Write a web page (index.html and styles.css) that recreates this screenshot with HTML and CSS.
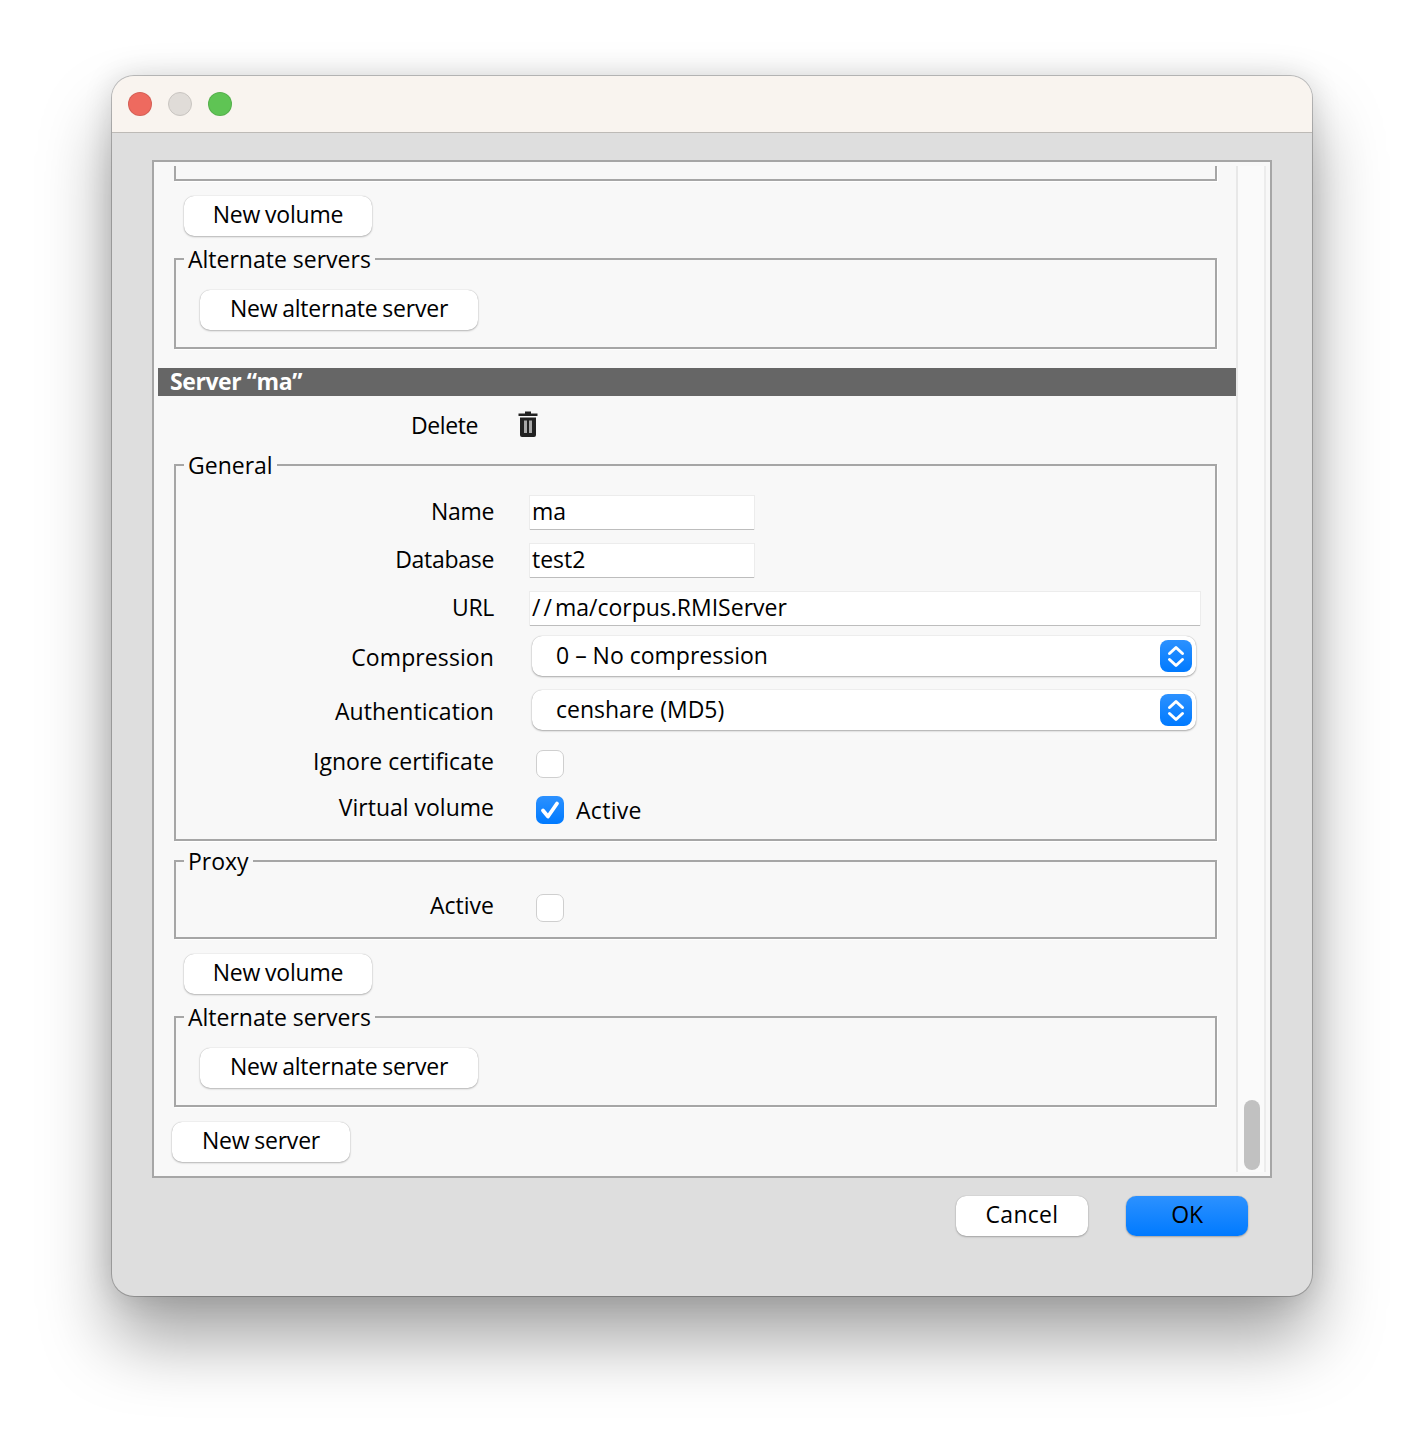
FILE: index.html
```html
<!DOCTYPE html>
<html lang="en">
<head>
<meta charset="utf-8">
<title>Server settings</title>
<link rel="stylesheet" href="styles.css">
</head>
<body>
<div class="window">
  <header class="titlebar">
    <span class="light light-close"></span>
    <span class="light light-min"></span>
    <span class="light light-max"></span>
  </header>
  <main class="dialog">
    <div class="panel">
      <div class="scroll-content">
        <div class="group-tail"></div>
        <button class="btn btn-volume">New volume</button>
        <fieldset class="group group-alt">
          <legend>Alternate servers</legend>
          <button class="btn btn-alt">New alternate server</button>
        </fieldset>
        <h2 class="server-head">Server “ma”</h2>
        <div class="delete-row">
          <span class="delete-label">Delete</span>
          <svg class="trash" width="20" height="26" viewBox="0 0 20 26">
            <path d="M7 0.500h6v2h6.500v2.500H.5V2.500h6.500z" fill="#222"/>
            <path d="M2 6.500h16v17.500a2 2 0 0 1-2 2H4a2 2 0 0 1-2-2z" fill="#222"/>
            <path d="M6 9.500h3v12.500H6zM11 9.500h3v12.500h-3z" fill="#a8a8a8"/>
          </svg>
        </div>
        <fieldset class="group group-general">
          <legend>General</legend>
          <div class="form">
            <label class="lbl lbl-text">Name</label>
            <div class="field field-short">ma</div>
            <label class="lbl lbl-text">Database</label>
            <div class="field field-short">test2</div>
            <label class="lbl lbl-text">URL</label>
            <div class="field field-long field-url"><span class="slashes">//</span>ma/corpus.RMIServer</div>
            <label class="lbl lbl-select">Compression</label>
            <div class="select"><span>0 – No compression</span>
              <span class="stepper"><svg width="32" height="32" viewBox="0 0 32 32"><path d="M9.500 13.500l6.500-6 6.500 6M9.500 19.500l6.500 6 6.500-6" fill="none" stroke="#fff" stroke-width="3" stroke-linecap="round" stroke-linejoin="round"/></svg></span>
            </div>
            <label class="lbl lbl-select">Authentication</label>
            <div class="select select-last"><span>censhare (MD5)</span>
              <span class="stepper"><svg width="32" height="32" viewBox="0 0 32 32"><path d="M9.500 13.500l6.500-6 6.500 6M9.500 19.500l6.500 6 6.500-6" fill="none" stroke="#fff" stroke-width="3" stroke-linecap="round" stroke-linejoin="round"/></svg></span>
            </div>
            <label class="lbl lbl-check">Ignore certificate</label>
            <div class="check-row"><span class="check"></span></div>
            <label class="lbl lbl-check">Virtual volume</label>
            <div class="check-row"><span class="check check-on"><svg width="28" height="28" viewBox="0 0 28 28"><path d="M7 14.500l5 6 9-13" fill="none" stroke="#fff" stroke-width="3.800" stroke-linecap="round" stroke-linejoin="round"/></svg></span><span class="check-text">Active</span></div>
          </div>
        </fieldset>
        <fieldset class="group group-proxy">
          <legend>Proxy</legend>
          <div class="form">
            <label class="lbl lbl-check">Active</label>
            <div class="check-row"><span class="check"></span></div>
          </div>
        </fieldset>
        <button class="btn btn-volume">New volume</button>
        <fieldset class="group group-alt">
          <legend>Alternate servers</legend>
          <button class="btn btn-alt">New alternate server</button>
        </fieldset>
        <button class="btn btn-server">New server</button>
      </div>
      <div class="scrollbar"><div class="thumb"></div></div>
    </div>
    <div class="actions">
      <button class="btn btn-cancel">Cancel</button>
      <button class="btn btn-ok">OK</button>
    </div>
  </main>
</div>
</body>
</html>
```
FILE: styles.css
```css
* { box-sizing: border-box; }
html, body { margin: 0; background: #fff; }
body {
  width: 1424px;
  height: 1444px;
  padding: 76px 112px 0;
  overflow: hidden;
  font-family: "Open Sans", "DejaVu Sans", sans-serif;
  font-size: 23px;
  color: #000;
}
.window {
  width: 1200px;
  height: 1220px;
  border-radius: 22px;
  background: #dedede;
  box-shadow: 0 0 0 1px rgba(0,0,0,.22), 0 44px 70px rgba(0,0,0,.36), 0 0 30px rgba(0,0,0,.14);
  display: flex;
  flex-direction: column;
}
.titlebar {
  height: 57px;
  flex: none;
  background: #f9f4ef;
  border-bottom: 1px solid #bdbab6;
  border-radius: 22px 22px 0 0;
  padding: 16px 16px 0;
  display: flex;
  gap: 16px;
}
.light { width: 24px; height: 24px; border-radius: 50%; border: 1px solid rgba(0,0,0,.1); }
.light-close { background: #ee6a5f; }
.light-min { background: #e0dcd8; border-color: #c9c5c1; }
.light-max { background: #5fc454; }
.dialog { flex: 1; padding: 27px 40px 0; display: flex; flex-direction: column; }
.panel {
  height: 1018px;
  flex: none;
  border: 2px solid #a6a6a6;
  background: #f8f8f8;
  padding: 4px;
  display: flex;
}
.scroll-content { width: 1078px; flex: none; height: 100%; overflow: hidden; }
.scrollbar {
  width: 30px;
  flex: none;
  position: relative;
  background: #fafafa;
  border-left: 2px solid #e8e8e8;
  border-right: 2px solid #ececec;
}
.thumb { position: absolute; left: 6px; right: 4px; bottom: 2px; height: 70px; border-radius: 8px; background: #c1c1c1; }

.btn {
  display: block;
  height: 40px;
  padding: 0 0 4px;
  border: 0;
  border-radius: 10px;
  background: #fff;
  font: inherit;
  letter-spacing: -0.2px;
  word-spacing: -1px;
  color: #000;
  text-align: center;
  line-height: 32px;
  box-shadow: 0 0 1px rgba(0,0,0,.3), 0 1px 2px rgba(0,0,0,.25);
}
.btn-volume { width: 188px; margin: 15px 0 0 26px; }
.btn-alt { width: 278px; margin: 17px 0 0 24px; }
.btn-server { width: 178px; margin: 15px 0 0 14px; }

.group-tail {
  height: 15px;
  margin: 0 19px 0 16px;
  border: 2px solid #a6a6a6;
  border-top: 0;
  box-shadow: 1px 1px 0 #fff;
}
.group {
  margin: 0 19px 0 16px;
  padding: 0;
  min-width: 0;
  border: 2px solid #a6a6a6;
  box-shadow: 1px 1px 0 #fff;
}
.group legend {
  margin-left: 8px;
  padding: 0 4px;
  height: 28px;
  line-height: 29px;
}
.group-alt { margin-top: 9px; height: 104px; }
.group-general { margin-top: 11px; height: 390px; }
.group-proxy { margin-top: 6px; height: 92px; }

.server-head {
  margin: 19px 0 0;
  height: 28px;
  padding-left: 12px;
  background: #666;
  color: #fff;
  font-size: 23px;
  font-weight: bold;
  letter-spacing: -0.43px;
  line-height: 26px;
}
.delete-row { display: flex; align-items: center; height: 30px; margin-top: 14px; }
.delete-label { width: 320px; text-align: right; letter-spacing: -0.4px; }
.trash { margin: 0 0 2px 40px; }

.form {
  display: grid;
  grid-template-columns: 318px 1fr;
  column-gap: 36px;
  align-items: start;
  padding-top: 17px;
}
.group-proxy .form { padding-top: 19px; }
.lbl { text-align: right; display: block; }
.lbl-text { height: 33px; line-height: 31px; letter-spacing: -0.3px; }
.lbl-select { height: 40px; line-height: 42px; letter-spacing: 0.1px; }
.lbl-check { height: 28px; line-height: 22px; }
.field {
  height: 33px;
  background: #fff;
  box-shadow: 0 1px 0 #bdbdbd, 0 0 0 1px #ececec;
  padding-left: 2px;
  line-height: 31px;
  margin-bottom: 15px;
}
.field-short { width: 224px; }
.field-long { width: 670px; }
.field-url { margin-bottom: 11px; }
.slashes { letter-spacing: 3px; }
.select {
  width: 664px;
  height: 40px;
  margin-left: 2px;
  margin-bottom: 14px;
  padding: 0 4px 0 24px;
  border-radius: 10px;
  background: #fff;
  line-height: 38px;
  box-shadow: 0 0 1px rgba(0,0,0,.3), 0 1px 2px rgba(0,0,0,.3);
  display: flex;
  align-items: center;
  justify-content: space-between;
}
.select > span:first-child { position: relative; top: -1px; }
.select-last { margin-bottom: 20px; }
.stepper {
  width: 32px;
  height: 32px;
  border-radius: 8px;
  background: linear-gradient(#2c91ff, #007aff);
  display: block;
}
.stepper svg, .check svg { display: block; }
.check-row { display: flex; align-items: center; height: 28px; margin-left: 6px; margin-bottom: 18px; }
.check-row:last-child { margin-bottom: 0; }
.check {
  width: 28px;
  height: 28px;
  border-radius: 7px;
  background: #fff;
  border: 1px solid #cfcfcf;
  display: block;
}
.check-on { border: 0; background: linear-gradient(#2c91ff, #007aff); }
.check-text { margin-left: 12px; letter-spacing: 0.3px; line-height: 26px; }

.actions { display: flex; justify-content: flex-end; padding: 18px 24px 0 0; gap: 38px; }
.btn-cancel { width: 132px; letter-spacing: 0.3px; }
.btn-ok { width: 122px; background: linear-gradient(#2c91ff, #007aff); }
```
